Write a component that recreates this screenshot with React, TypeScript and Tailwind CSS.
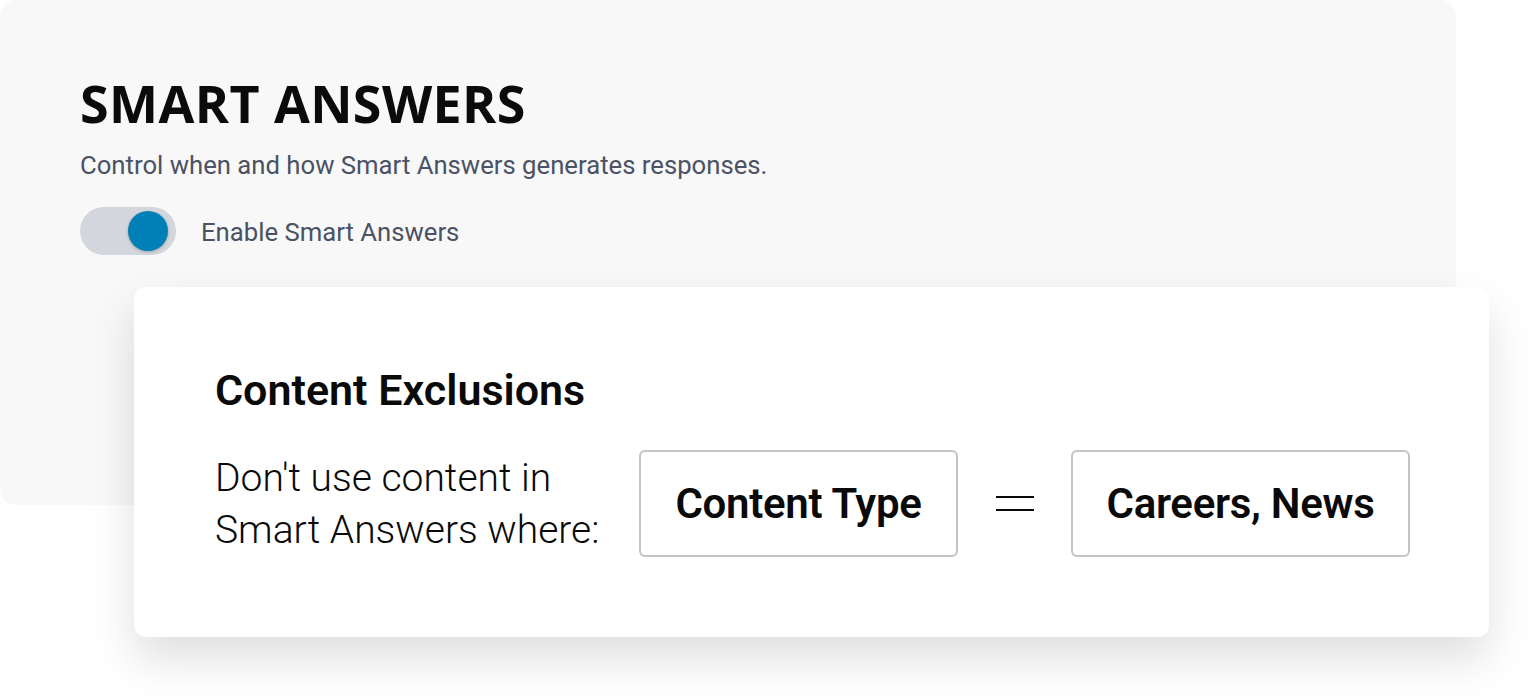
const Toggle = () => (
  <div className="flex h-[48px] w-[96px] items-center justify-end rounded-full bg-[#d3d6dc] pr-[8px]">
    <div className="h-[40px] w-[40px] rounded-full bg-[#0180b8] shadow-[0_1px_3px_rgba(0,0,0,0.25)]" />
  </div>
);

const ValueBox = ({ label, width }: { label: string; width: string }) => (
  <div
    className={`flex h-[107px] ${width} items-center justify-center rounded-md border-2 border-[#c4c4c4] bg-white text-[42px] font-semibold tracking-[-0.3px] text-[#0a0a0a]`}
  >
    {label}
  </div>
);

export default function App() {
  return (
    <div className="h-[698px] w-[1530px] overflow-hidden bg-white font-['Roboto',sans-serif]">
      {/* settings panel */}
      <section className="h-[505px] w-[1456px] rounded-2xl bg-[#f8f8f8] pl-[80px] pt-[77px]">
        <h1 className="font-['Open_Sans',sans-serif] text-[52px] font-bold leading-none tracking-[0.4px] text-[#0b0b0b]">
          SMART ANSWERS
        </h1>
        <p className="mt-[24px] text-[25.7px] leading-none text-[#4a5263]">
          Control when and how Smart Answers generates responses.
        </p>
        <div className="mt-[28px] flex items-center gap-[25px]">
          <Toggle />
          <span className="pt-[4px] text-[25.7px] text-[#4a5263]">Enable Smart Answers</span>
        </div>
      </section>

      {/* exclusions card */}
      <div className="-mt-[218px] ml-[134px] h-[350px] w-[1355px] rounded-xl bg-white pl-[81px] pt-[82px] shadow-[0_22px_45px_rgba(0,0,0,0.13)]">
        <h2 className="text-[43px] font-semibold leading-none text-[#0a0a0a]">Content Exclusions</h2>
        <div className="mt-[38px] flex items-center">
          <p className="w-[424px] text-[39px] font-light leading-[52px] text-[#0a0a0a]">
            Don't use content in
            <br />
            Smart Answers where:
          </p>
          <ValueBox label="Content Type" width="w-[319px]" />
          <div className="flex w-[113px] justify-center">
            <div className="flex w-[38px] flex-col gap-[11px]">
              <div className="h-[2px] bg-[#0a0a0a]" />
              <div className="h-[2px] bg-[#0a0a0a]" />
            </div>
          </div>
          <ValueBox label="Careers, News" width="w-[339px]" />
        </div>
      </div>
    </div>
  );
}
